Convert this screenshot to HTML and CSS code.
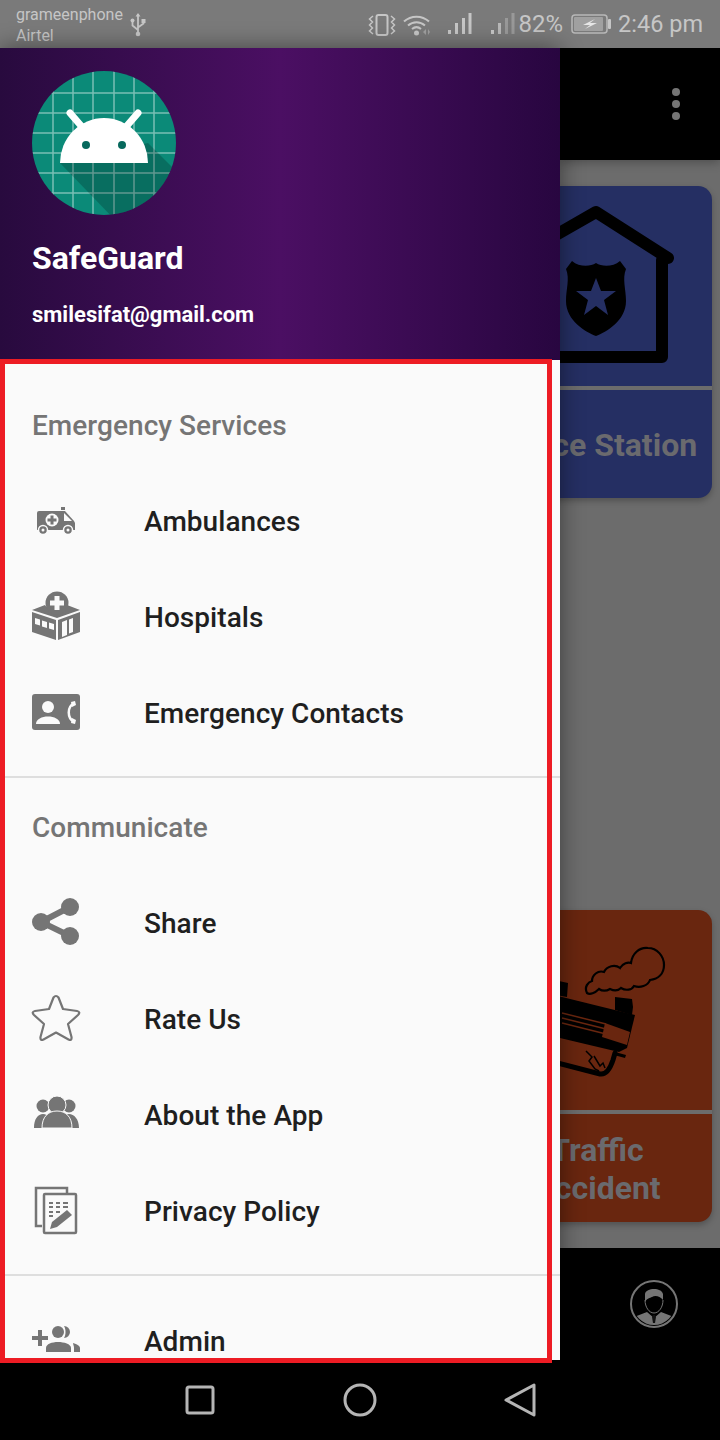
FILE: index.html
```html
<!DOCTYPE html>
<html lang="en">
<head>
<meta charset="utf-8">
<title>SafeGuard</title>
<link rel="stylesheet" href="styles.css">
</head>
<body>
<div class="phone">
  <header class="status">
    <div class="carriers"><span>grameenphone</span><span>Airtel</span></div>
    <svg class="st-usb" width="16" height="24" viewBox="0 0 16 24"><path d="M8 1v20M8 17L2.5 12.5V8M8 14.5l5.500-4V8" fill="none" stroke="#c6c6c6" stroke-width="1.800"/><path d="M8 0l2.500 3.500h-5z" fill="#c6c6c6"/><circle cx="8" cy="21" r="2.300" fill="#c6c6c6"/><circle cx="2.500" cy="7.500" r="2" fill="#c6c6c6"/><rect x="11.500" y="6" width="4" height="4" fill="#c6c6c6"/></svg>
    <div class="status-right">
      <svg class="st-vib" width="28" height="22" viewBox="0 0 28 22"><rect x="8.500" y="1" width="11" height="20" rx="2" fill="none" stroke="#c6c6c6" stroke-width="2"/><path d="M5 2L1.500 5l3 3-3 3 3 3-3 3L5 20M23 2l3.500 3-3 3 3 3-3 3 3 3L23 20" fill="none" stroke="#c6c6c6" stroke-width="1.500"/></svg>
      <svg class="st-wifi" width="28" height="22" viewBox="0 0 28 22"><path d="M1 7.500C8 1 19 1 26 7.500M5 11.500c5-4.500 12-4.500 17 0M9 15c3-2.500 6-2.500 9 0" fill="none" stroke="#c6c6c6" stroke-width="2"/><circle cx="13.500" cy="19" r="2.500" fill="#c6c6c6"/><path d="M20 18l3-3v6zM25 15l2 3-2 3z" fill="#a0a0a0"/></svg>
      <svg class="st-sig" width="24" height="22" viewBox="0 0 24 22"><path d="M0 17h3v4H0zM7 10h3v11H7zM14 5h3v16h-3zM20.500 0h3v21h-3z" fill="#c6c6c6"/></svg>
      <svg class="st-sig2" width="24" height="22" viewBox="0 0 24 22"><path d="M0 17h3v4H0z" fill="#c6c6c6"/><path d="M7 10h3v11H7z" fill="#b8b8b8"/><path d="M14 5h3v16h-3zM20.500 0h3v21h-3z" fill="#999"/></svg>
      <span class="st-pct">82%</span>
      <svg class="st-bat" width="40" height="20" viewBox="0 0 40 20"><rect x="1" y="1" width="35" height="18" rx="3" fill="none" stroke="#b8b8b8" stroke-width="1.500"/><rect x="3" y="3" width="29" height="14" rx="1" fill="#a0a0a0"/><path d="M24 5L12 11h7l-5 4 12-6h-7z" fill="#e6e6e6"/><rect x="37" y="5" width="3" height="10" rx="1" fill="#c6c6c6"/></svg>
      <span class="st-time">2:46 pm</span>
    </div>
  </header>

  <main class="main">
    <nav class="drawer">
      <div class="drawer-head">
        <svg class="avatar" width="144" height="144" viewBox="0 0 144 144">
          <defs><clipPath id="round"><circle cx="72" cy="72" r="72"/></clipPath></defs>
          <circle cx="72" cy="72" r="72" fill="#0b8a78"/>
          <g clip-path="url(#round)">
            <path d="M21 0v144M41 0v144M61 0v144M82 0v144M102 0v144M122 0v144M0 22h144M0 42h144M0 62h144M0 82h144M0 102h144M0 122h144" stroke="#fff" stroke-opacity=".45" stroke-width="1.500"/>
            <path d="M28 92L116 72L190 146L84 150Z" fill="#000" fill-opacity=".2"/>
          </g>
          <path d="M28 92A44 45 0 0 1 116 92Z" fill="#fff"/>
          <path d="M38 42L51 57M106 42L93 57" stroke="#fff" stroke-width="7" stroke-linecap="round"/>
          <circle cx="54" cy="74" r="4" fill="#07695d"/><circle cx="90" cy="74" r="4" fill="#07695d"/>
        </svg>
        <div class="app-name">SafeGuard</div>
        <div class="app-mail">smilesifat@gmail.com</div>
      </div>

      <div class="group first">
        <div class="sub">Emergency Services</div>
        <div class="item">
          <svg class="ico" width="48" height="48" viewBox="0 0 48 48"><path d="M5 16q0-2 2-2h26l9 10 1 2v7H5z" fill="#757575"/><path d="M32 16l8 8h-8z" fill="#fafafa"/><circle cx="20" cy="23" r="6.500" fill="#fafafa"/><path d="M18.500 18.500h3v3h3v3h-3v3h-3v-3h-3v-3h3z" fill="#757575"/><circle cx="11" cy="33" r="4.500" fill="#757575" stroke="#fafafa" stroke-width="1.500"/><circle cx="36" cy="33" r="4.500" fill="#757575" stroke="#fafafa" stroke-width="1.500"/><circle cx="11" cy="33" r="1.500" fill="#fafafa"/><circle cx="36" cy="33" r="1.500" fill="#fafafa"/><path d="M29 10h4v3h-4z" fill="#757575"/></svg>
          <span>Ambulances</span>
        </div>
        <div class="item">
          <svg class="ico" width="48" height="48" viewBox="0 0 48 48"><path d="M0 17l13-5c3 6 19 6 22 0l13 5-23 8z" fill="#757575"/><path d="M0 19l24 8v20L0 39z" fill="#757575"/><path d="M26 27l22-8v20l-22 8z" fill="#757575"/><circle cx="25" cy="10" r="11.500" fill="#757575"/><path d="M22.500 3h5v4.500H32v5h-4.500V17h-5v-4.500H18v-5h4.500z" fill="#fafafa"/><path d="M3 25l5 1.500v6l-5-1.500zM10 27.500l5 1.500v6l-5-1.500zM17 29.500l5 1.500v6l-5-1.500zM30 29l5-2v15l-5 2zM37 26.500l4-1.500v14l-4 1.500z" fill="#fafafa"/></svg>
          <span>Hospitals</span>
        </div>
        <div class="item">
          <svg class="ico" width="48" height="48" viewBox="0 0 48 48"><rect x="0" y="5" width="48" height="36" rx="3" fill="#757575"/><circle cx="16" cy="18" r="6" fill="#fafafa"/><path d="M4 35c0-5 6-7.500 12-7.500S28 30 28 35z" fill="#fafafa"/><path d="M42 14C35 18 35 29 42 33" fill="none" stroke="#fafafa" stroke-width="2.500"/><path d="M39 13l4-1 1 4-4 2zM39 34l4 1 1-4-4-2z" fill="#fafafa"/></svg>
          <span>Emergency Contacts</span>
        </div>
      </div>

      <div class="group second">
        <div class="sub">Communicate</div>
        <div class="item">
          <svg class="ico" width="48" height="48" viewBox="0 0 48 48"><path d="M38 8L9 23l29 14" fill="none" stroke="#757575" stroke-width="6"/><circle cx="38" cy="8" r="9" fill="#757575"/><circle cx="9" cy="23" r="9" fill="#757575"/><circle cx="38" cy="37" r="9" fill="#757575"/></svg>
          <span>Share</span>
        </div>
        <div class="item">
          <svg class="ico" width="48" height="48" viewBox="0 0 48 48"><path d="M21.500 2.500Q24-.5 26.500 2.500L31 14 45 16Q49 17 46 20L36 29 39.500 42Q40 46 36.500 44.500L24 37.500 11.500 44.500Q8 46 8.500 42L12 29 2 20Q-1 17 3 16L17 14Z" fill="none" stroke="#757575" stroke-width="2.200" stroke-linejoin="round"/></svg>
          <span>Rate Us</span>
        </div>
        <div class="item">
          <svg class="ico" width="48" height="48" viewBox="0 0 48 48"><circle cx="11" cy="15" r="6.500" fill="#757575"/><circle cx="37" cy="15" r="6.500" fill="#757575"/><path d="M2 37c0-9 4-14 9-14s9 5 9 14zM28 37c0-9 4-14 9-14s10 5 10 14z" fill="#757575"/><circle cx="25" cy="14" r="9" fill="#757575" stroke="#fafafa"/><path d="M10 37c0-11 6-17 15-17s15 6 15 17z" fill="#757575" stroke="#fafafa"/></svg>
          <span>About the App</span>
        </div>
        <div class="item">
          <svg class="ico" width="48" height="48" viewBox="0 0 48 48"><path d="M10 39H4V1h31v5" fill="none" stroke="#757575" stroke-width="2.500"/><rect x="12" y="7" width="32" height="39" rx="1" fill="#fafafa" stroke="#757575" stroke-width="2.500"/><path d="M17 16h4M24 16h4M31 16h5M17 20h4M24 20h4M31 20h5M17 25h4M24 25h4M17 29h4" stroke="#757575" stroke-width="2"/><path d="M18 42l2-7 15-12 5 5-15 12z" fill="#757575"/></svg>
          <span>Privacy Policy</span>
        </div>
      </div>

      <div class="group last">
        <div class="item">
          <svg class="ico" width="48" height="48" viewBox="0 0 48 48"><path d="M6 13h4v6h6v4h-6v6H6v-6H0v-4h6z" fill="#757575"/><circle cx="26" cy="15" r="6" fill="#757575"/><path d="M14 35v-4c0-4 6-6 12-6s13 2 13 6v4z" fill="#757575"/><path d="M32 9a6 6 0 0 1 0 12c2-3 2-9 0-12zM41 26c4 1 7 3 7 5v4h-6v-4c0-2-1-4-1-5z" fill="#757575"/></svg>
          <span>Admin</span>
        </div>
      </div>
    </nav>

    <section class="behind">
      <div class="toolbar"><i class="dot"></i><i class="dot"></i><i class="dot"></i></div>
      <div class="content">
        <article class="card card-blue">
          <div class="card-art">
            <svg width="228" height="200" viewBox="0 0 228 200">
              <path d="M32 72L112 26L184 72M178 74V171H40" fill="none" stroke="#000" stroke-width="12" stroke-linecap="round" stroke-linejoin="round"/>
              <path d="M112 77c6 4 17 4 24-2l6 8c-4 10 0 20 0 32 0 20-20 31-30 35-10-4-30-15-30-35 0-12 4-22 0-32l6-8c7 6 18 6 24 2z" fill="#000"/>
              <path d="M112 92l5 13h15l-12 9 4 15-12-9-12 9 4-15-12-9h15z" fill="#252f63"/>
            </svg>
          </div>
          <div class="card-label">Police Station</div>
        </article>
        <article class="card card-red">
          <div class="card-art">
            <svg width="228" height="200" viewBox="0 0 228 200">
              <path d="M103 83c-3-6 1-11 5-12 0-6 6-11 12-9 3-6 11-8 16-4 3-5 8-6 11-5 1-9 8-16 17-15 9 0 16 8 16 17 0 9-6 14-14 15-2 6-10 8-16 6-2 4-8 5-13 2-3 3-7 3-11 1-5 3-8 2-11 0-4 4-9 6-12 4z" fill="none" stroke="#000" stroke-width="2.200"/>
              <path d="M131 87l17 2 1 8-1 8-17-5zM66 69l18 4-1 14-18-3z" fill="#000"/>
              <path d="M50 80l101 25-8 33-8 4L50 122z" fill="#000"/>
              <path d="M78 103l44 11M78 108l44 11M78 113l44 11" stroke="#69260f" stroke-width="1.500"/>
              <path d="M121 113l25 9-3 13-25-8z" fill="#69260f"/>
              <path d="M62 150l54 14c6 1 10-5 13-14l2-7" fill="none" stroke="#000" stroke-width="5" stroke-linecap="round"/>
              <path d="M131 142l11 3-1 3-11-3z" fill="#000"/>
              <path d="M102 141l6 6-3 4 6 8 4 2M110 146l6 10 3-3 2 5" fill="none" stroke="#000" stroke-width="1.500"/>
            </svg>
          </div>
          <div class="card-label">Traffic<br>Accident</div>
        </article>
      </div>
      <div class="bottom">
        <svg width="48" height="48" viewBox="0 0 48 48"><defs><clipPath id="ring"><circle cx="24" cy="24" r="21"/></clipPath></defs><circle cx="24" cy="24" r="23" fill="none" stroke="#757575" stroke-width="2"/><g clip-path="url(#ring)"><path d="M4 48V37l13-5 7 6 7-6 13 5v11z" fill="#757575"/><path d="M23 35h2l1 2-1 6h-2l-1-6z" fill="#111"/></g><path d="M15 14c1-6 16-7 18 0v6c-3-4-8-5-11-3-2 1-5 1-7 5z" fill="#757575"/><path d="M15 20c0 7 4 13 9 13s9-6 9-13" fill="none" stroke="#757575"/></svg>
      </div>
    </section>
  </main>

  <footer class="navbar">
    <svg width="32" height="32" viewBox="0 0 32 32"><rect x="3" y="3" width="26" height="26" rx="2" fill="none" stroke="#b5b5b5" stroke-width="3"/></svg>
    <svg width="36" height="36" viewBox="0 0 36 36"><circle cx="18" cy="18" r="15" fill="none" stroke="#b5b5b5" stroke-width="3"/></svg>
    <svg class="nav-back" width="34" height="36" viewBox="0 0 34 36"><path d="M31 3v30L3 18z" fill="none" stroke="#b5b5b5" stroke-width="3" stroke-linejoin="round"/></svg>
  </footer>

  <div class="callout"></div>
</div>
</body>
</html>
```

FILE: styles.css
```css
* { box-sizing: border-box; }
html, body { margin: 0; padding: 0; }
body { background: #000; font-family: Roboto, "Noto Sans", sans-serif; }

.phone {
  position: relative;
  width: 720px;
  height: 1440px;
  display: flex;
  flex-direction: column;
  overflow: hidden;
}

/* status bar */
.status {
  height: 48px;
  flex: none;
  background: #7a7a7a;
  color: #c6c6c6;
  display: flex;
  align-items: center;
  padding: 0 17px 0 16px;
}
.carriers {
  display: flex;
  flex-direction: column;
  font-size: 16px;
  line-height: 21px;
  padding-top: 1px;
}
.st-usb { margin-left: 7px; margin-top: 2px; }
.status-right {
  margin-left: auto;
  display: flex;
  align-items: center;
}
.st-vib { margin-top: 2px; }
.st-wifi { margin-left: 7px; margin-top: 2px; }
.st-sig { margin-left: 17px; }
.st-sig2 { margin-left: 19px; }
.st-pct { font-size: 24px; margin-left: 3px; }
.st-bat { margin-left: 8px; }
.st-time { font-size: 23.500px; margin-left: 7px; }

/* main split */
.main { flex: 1; min-height: 0; display: flex; }

/* drawer */
.drawer {
  width: 560px;
  flex: none;
  background: #fafafa;
  overflow: hidden;
  box-shadow: 0 0 22px rgba(0, 0, 0, .45);
  position: relative;
  z-index: 2;
}
.drawer-head {
  height: 312px;
  padding: 23px 32px 0;
  background: linear-gradient(90deg, #280a3e 0%, #4b0f63 50%, #280640 100%);
  color: #fff;
}
.avatar { display: block; }
.app-name {
  margin-top: 23px;
  font-size: 32px;
  line-height: 40px;
  font-weight: 700;
}
.app-mail {
  margin-top: 23px;
  font-size: 22px;
  line-height: 28px;
  font-weight: 700;
}

.group {
  padding-bottom: 15px;
  border-bottom: 2px solid #dedede;
}
.group.first { padding-top: 17px; }
.group.second { padding-top: 1px; }
.group.last { padding-top: 17px; border-bottom: 0; }
.sub {
  height: 96px;
  padding-left: 32px;
  display: flex;
  align-items: center;
  font-size: 28px;
  font-weight: 500;
  letter-spacing: .05px;
  color: #757575;
}
.item {
  height: 96px;
  padding-left: 32px;
  display: flex;
  align-items: center;
  gap: 64px;
  font-size: 28px;
  font-weight: 500;
  letter-spacing: .05px;
  color: #1f1f1f;
}
.ico { flex: none; display: block; overflow: visible; }

/* dimmed screen behind the drawer */
.behind {
  flex: 1;
  min-width: 0;
  display: flex;
  flex-direction: column;
  overflow: hidden;
}
.toolbar {
  height: 112px;
  flex: none;
  background: #000;
  padding-right: 40px;
  display: flex;
  flex-direction: column;
  align-items: flex-end;
  justify-content: center;
  gap: 4px;
  box-shadow: 0 2px 10px rgba(0, 0, 0, .3);
  position: relative;
}
.dot {
  width: 8px;
  height: 8px;
  border-radius: 50%;
  background: #757575;
}
.content {
  flex: 1;
  min-height: 0;
  background: #6c6c6c;
  padding: 26px 8px 26px 0;
  display: flex;
  flex-direction: column;
  justify-content: space-between;
}
.card {
  height: 312px;
  margin-left: -78px;
  border-radius: 14px;
  display: flex;
  flex-direction: column;
  overflow: hidden;
  box-shadow: 0 3px 6px rgba(0, 0, 0, .25);
}
.card-blue { background: #252f63; }
.card-red { background: #69260f; }
.card-art {
  height: 204px;
  flex: none;
  padding-left: 2px;
  border-bottom: 4px solid #6c6c6c;
}
.card-art svg { display: block; }
.card-label {
  flex: 1;
  display: flex;
  align-items: center;
  justify-content: center;
  padding-top: 2px;
  text-align: center;
  white-space: nowrap;
  font-size: 32px;
  line-height: 38px;
  font-weight: 700;
  color: #6a6a6e;
}
.bottom {
  height: 112px;
  flex: none;
  background: #000;
  padding: 32px 42px 0 0;
  display: flex;
  justify-content: flex-end;
  align-items: flex-start;
}
.bottom svg { display: block; }

/* system navigation */
.navbar {
  height: 80px;
  flex: none;
  background: #000;
  display: flex;
  align-items: center;
  justify-content: center;
  gap: 126px;
}
.navbar svg { display: block; }
.nav-back { margin-left: -1px; }

/* annotation rectangle over the menu */
.callout {
  position: absolute;
  left: 0;
  top: 359px;
  width: 552px;
  height: 1004px;
  border: 5px solid #ed1c24;
  pointer-events: none;
  z-index: 3;
}
```
